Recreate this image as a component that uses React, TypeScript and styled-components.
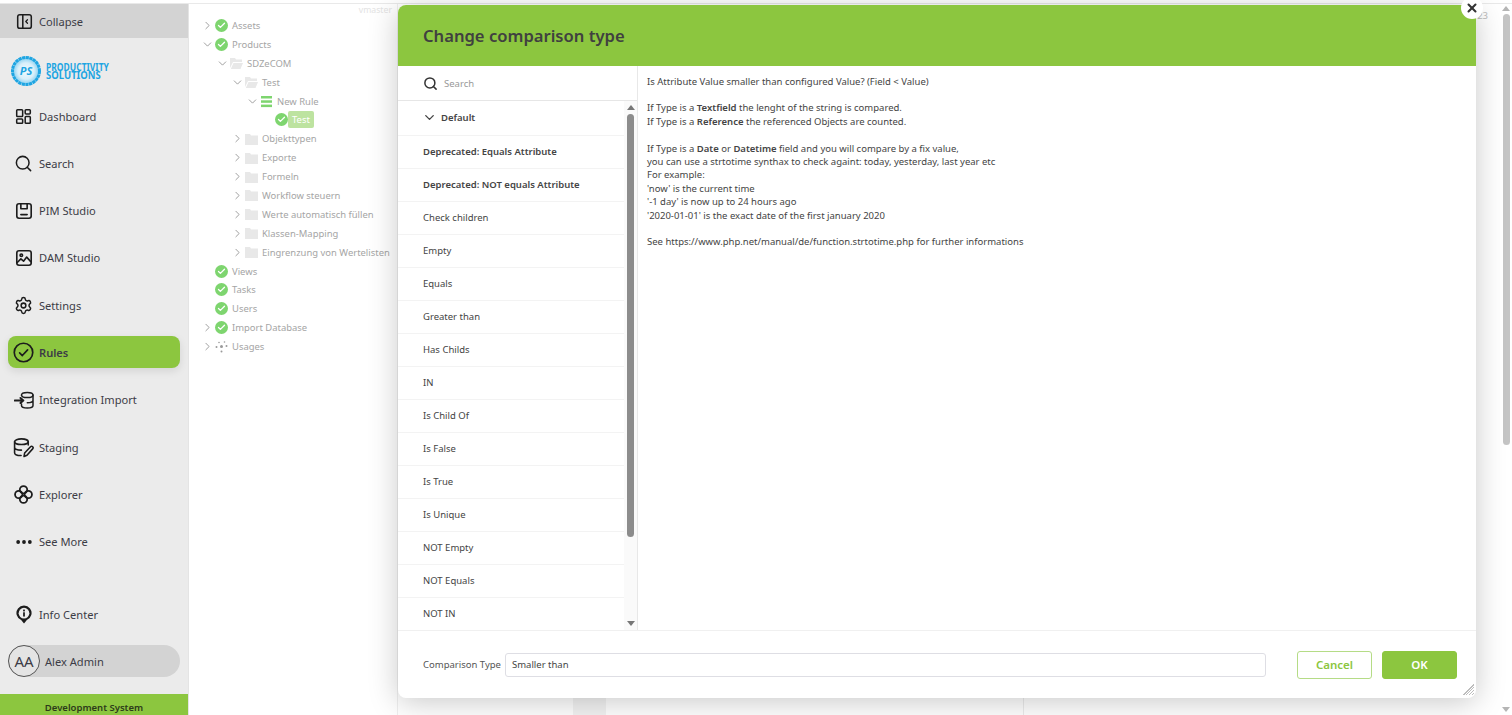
import React from 'react';
import styled, { createGlobalStyle } from 'styled-components';
import { Search, Settings, ChevronRight, ChevronDown, Check, X } from 'lucide-react';

const GREEN = '#8cc63f';
const FONT = '"Noto Sans", "Open Sans", sans-serif';

const GlobalStyle = createGlobalStyle`
	html, body { margin: 0; height: 100%; overflow: hidden; background: #fff; }
	body { font-family: ${FONT}; color: #444; }
	#root { height: 100%; }
	* { box-sizing: border-box; }
`;

type NavEntry = { label: string; icon: React.ReactNode; active?: boolean };

const Svg = ({ children, size = 18 }: { children: React.ReactNode; size?: number }) => (
	<svg width={size} height={size} viewBox="0 0 20 20" fill="none" stroke="#1c1c1c" strokeWidth="1.8" strokeLinecap="round" strokeLinejoin="round">
		{children}
	</svg>
);

const navItems: NavEntry[] = [
	{
		label: 'Dashboard',
		icon: (
			<Svg size={17}>
				<rect x="2" y="2" width="7" height="8" rx="1" />
				<rect x="12" y="2" width="6" height="5" rx="1" />
				<rect x="2" y="13" width="7" height="5" rx="1" />
				<rect x="12" y="10" width="6" height="8" rx="1" />
			</Svg>
		),
	},
	{ label: 'Search', icon: <Search size={19} strokeWidth={1.9} color="#1c1c1c" /> },
	{
		label: 'PIM Studio',
		icon: (
			<Svg size={18}>
				<rect x="2" y="2" width="16" height="16" rx="2.5" />
				<path d="M6.5 2v5.5h7V2" />
				<path d="M6.5 14h7" />
			</Svg>
		),
	},
	{
		label: 'DAM Studio',
		icon: (
			<Svg size={18}>
				<rect x="2" y="2" width="16" height="16" rx="2.5" />
				<circle cx="7" cy="7" r="1.4" />
				<path d="M2.5 15l4-4 3 2.5 3.5-4.5 4.5 5" />
			</Svg>
		),
	},
	{ label: 'Settings', icon: <Settings size={19} strokeWidth={1.9} color="#1c1c1c" /> },
	{
		label: 'Rules',
		active: true,
		icon: (
			<Svg size={21}>
				<circle cx="10" cy="10" r="8.8" strokeWidth="1.6" />
				<path d="M6.300 10.300l2.600 2.600 5-5.400" strokeWidth="1.600" />
			</Svg>
		),
	},
	{
		label: 'Integration Import',
		icon: (
			<Svg size={20}>
				<path d="M7.500 5.500V5c0-1.500 2.500-2.600 5.800-2.600S19 3.500 19 5s-2.500 2.600-5.700 2.600S7.500 6.500 7.500 5" strokeWidth="1.500" />
				<path d="M19 5v10.500c0 1.400-2.500 2.500-5.700 2.500s-5.800-1.100-5.800-2.500V14M19 10.300c0 1.400-2.500 2.500-5.700 2.500" strokeWidth="1.500" />
				<path d="M.8 10.500h8.200M6.500 8l2.800 2.500L6.500 13" strokeWidth="2" />
			</Svg>
		),
	},
	{
		label: 'Staging',
		icon: (
			<Svg size={21}>
				<ellipse cx="8" cy="4.500" rx="6.500" ry="2.700" strokeWidth="1.500" />
				<path d="M1.500 4.500v10.500c0 1.500 2.800 2.700 6.200 2.700M14.500 4.500v3M1.500 9.800c0 1.500 2.800 2.700 6.500 2.700" strokeWidth="1.500" />
				<path d="M10.500 18.500l.6-3.200 5.600-6a1.400 1.400 0 0 1 2 2l-5.400 6z" strokeWidth="1.500" />
			</Svg>
		),
	},
	{
		label: 'Explorer',
		icon: (
			<Svg size={19}>
				<circle cx="10" cy="5" r="3.900" strokeWidth="1.900" />
				<circle cx="5" cy="10" r="3.900" strokeWidth="1.900" />
				<circle cx="15" cy="10" r="3.900" strokeWidth="1.900" />
				<circle cx="10" cy="15" r="3.900" strokeWidth="1.900" />
			</Svg>
		),
	},
	{
		label: 'See More',
		icon: (
			<Svg size={18}>
				<circle cx="3.500" cy="10" r="1.200" fill="#1c1c1c" />
				<circle cx="10" cy="10" r="1.200" fill="#1c1c1c" />
				<circle cx="16.500" cy="10" r="1.200" fill="#1c1c1c" />
			</Svg>
		),
	},
];

type TreeEntry = { label: string; level: number; toggle?: 'open' | 'closed'; icon: 'check' | 'folder' | 'folderOpen' | 'lines' | 'nodes'; selected?: boolean };

const tree: TreeEntry[] = [
	{ label: 'Assets', level: 0, toggle: 'closed', icon: 'check' },
	{ label: 'Products', level: 0, toggle: 'open', icon: 'check' },
	{ label: 'SDZeCOM', level: 1, toggle: 'open', icon: 'folderOpen' },
	{ label: 'Test', level: 2, toggle: 'open', icon: 'folderOpen' },
	{ label: 'New Rule', level: 3, toggle: 'open', icon: 'lines' },
	{ label: 'Test', level: 4, icon: 'check', selected: true },
	{ label: 'Objekttypen', level: 2, toggle: 'closed', icon: 'folder' },
	{ label: 'Exporte', level: 2, toggle: 'closed', icon: 'folder' },
	{ label: 'Formeln', level: 2, toggle: 'closed', icon: 'folder' },
	{ label: 'Workflow steuern', level: 2, toggle: 'closed', icon: 'folder' },
	{ label: 'Werte automatisch füllen', level: 2, toggle: 'closed', icon: 'folder' },
	{ label: 'Klassen-Mapping', level: 2, toggle: 'closed', icon: 'folder' },
	{ label: 'Eingrenzung von Wertelisten', level: 2, toggle: 'closed', icon: 'folder' },
	{ label: 'Views', level: 0, icon: 'check' },
	{ label: 'Tasks', level: 0, icon: 'check' },
	{ label: 'Users', level: 0, icon: 'check' },
	{ label: 'Import Database', level: 0, toggle: 'closed', icon: 'check' },
	{ label: 'Usages', level: 0, toggle: 'closed', icon: 'nodes' },
];

const comparisons: { label: string; strong?: boolean }[] = [
	{ label: 'Deprecated: Equals Attribute', strong: true },
	{ label: 'Deprecated: NOT equals Attribute', strong: true },
	{ label: 'Check children' },
	{ label: 'Empty' },
	{ label: 'Equals' },
	{ label: 'Greater than' },
	{ label: 'Has Childs' },
	{ label: 'IN' },
	{ label: 'Is Child Of' },
	{ label: 'Is False' },
	{ label: 'Is True' },
	{ label: 'Is Unique' },
	{ label: 'NOT Empty' },
	{ label: 'NOT Equals' },
	{ label: 'NOT IN' },
];

const TreeIcon = ({ kind }: { kind: TreeEntry['icon'] }) => {
	if (kind === 'check') {
		return (
			<CheckBadge>
				<Check size={9} strokeWidth={3.500} color="#fff" />
			</CheckBadge>
		);
	}
	if (kind === 'lines') {
		return (
			<TreeGlyph width="13" height="13" viewBox="0 0 13 13" fill="#7ed56f">
				<rect x="1" y="1" width="11" height="2.500" />
				<rect x="1" y="5.300" width="11" height="2.500" />
				<rect x="1" y="9.600" width="11" height="2.500" />
			</TreeGlyph>
		);
	}
	if (kind === 'nodes') {
		return (
			<TreeGlyph width="13" height="13" viewBox="0 0 13 13" fill="#9a9a9a">
				<circle cx="6.500" cy="6.500" r="1.500" />
				<circle cx="1.500" cy="7" r="1" />
				<circle cx="11.500" cy="6" r="1" />
				<circle cx="6.500" cy="11.500" r="1" />
				<circle cx="4" cy="2.500" r=".8" />
				<circle cx="9.500" cy="2" r=".8" />
			</TreeGlyph>
		);
	}
	return (
		<TreeGlyph width="13" height="12" viewBox="0 0 13 12" fill="#e8e8e8">
			{kind === 'folder' ? (
				<path d="M0 1h5l1 1.500h7V12H0z" />
			) : (
				<path d="M0 1h5l1 1.500h6V5H3L0 11zM3.500 6H13l-2.500 6H.8z" />
			)}
		</TreeGlyph>
	);
};

export default function App() {
	return (
		<Page>
			<GlobalStyle />
			<Sidebar>
				<CollapseRow>
					<NavIcon>
						<Svg size={17}>
							<rect x="2" y="2" width="16" height="16" rx="2.500" />
							<path d="M8 2v16" />
							<path d="M13.500 8l-2 2 2 2" strokeWidth="1.500" />
						</Svg>
					</NavIcon>
					Collapse
				</CollapseRow>
				<LogoRow>
					<svg width="102" height="32" viewBox="0 0 102 32">
						<defs>
							<radialGradient id="logoFill">
								<stop offset="0" stopColor="#f2fafe" />
								<stop offset="0.6" stopColor="#d8effa" />
								<stop offset="1" stopColor="#7fcdf0" />
							</radialGradient>
						</defs>
						<circle cx="16" cy="16" r="13.500" fill="url(#logoFill)" stroke="#1ea5e2" strokeWidth="3" strokeDasharray="3.200 .5" />
						<text x="16" y="20" textAnchor="middle" fontSize="11" fontWeight="700" fontStyle="italic" fill="#1ea5e2" fontFamily="Noto Sans">PS</text>
						<text transform="translate(36 16) scale(.85 1)" fontSize="10" fontWeight="700" fill="#1ea5e2" fontFamily="Noto Sans">PRODUCTIVITY</text>
						<text transform="translate(36 23.500) scale(.95 1)" fontSize="10" fontWeight="700" fill="#1ea5e2" fontFamily="Noto Sans">SOLUTIONS</text>
					</svg>
				</LogoRow>
				<NavList>
					{navItems.map((item) => (
						<NavItem key={item.label} $active={item.active}>
							<NavIcon>{item.icon}</NavIcon>
							{item.label}
						</NavItem>
					))}
				</NavList>
				<SidebarBottom>
					<NavItem>
						<NavIcon>
							<svg width="16" height="19" viewBox="0 0 18 21" fill="none">
								<path d="M9 20.500l-3.200-3.700A8.500 8.500 0 1 1 12.200 16.800z" fill="#1c1c1c" />
								<circle cx="9" cy="9" r="6" fill="#ebebeb" />
								<rect x="8" y="8" width="2" height="4.800" fill="#1c1c1c" />
								<rect x="8" y="5" width="2" height="2" fill="#1c1c1c" />
							</svg>
						</NavIcon>
						Info Center
					</NavItem>
					<UserPill>
						<Avatar>AA</Avatar>
						Alex Admin
					</UserPill>
				</SidebarBottom>
				<SystemBar>Development System</SystemBar>
			</Sidebar>

			<TreePane>
				<Version>vmaster</Version>
				{tree.map((node, i) => (
					<TreeRow key={i} $level={node.level}>
						<Toggle>
							{node.toggle === 'open' && <ChevronDown size={15} color="#8a8a8a" strokeWidth={1.500} />}
							{node.toggle === 'closed' && <ChevronRight size={15} color="#8a8a8a" strokeWidth={1.500} />}
						</Toggle>
						<TreeIcon kind={node.icon} />
						<TreeLabel $selected={node.selected}>{node.label}</TreeLabel>
					</TreeRow>
				))}
			</TreePane>

			<Backdrop>
				<BackCount>23</BackCount>
				<BackBlock />
				<BackLine />
			</Backdrop>

			<PageScroll>
				<ScrollArrow $down={false} $color="#b5b5b5" />
				<PageThumb />
				<ScrollArrow $down $color="#b5b5b5" />
			</PageScroll>

			<Modal>
				<CloseButton>
					<X size={14} strokeWidth={3.500} color="#333" />
				</CloseButton>
				<ModalHeader>Change comparison type</ModalHeader>
				<ModalBody>
					<ListPane>
						<SearchRow>
							<Search size={15} strokeWidth={2.400} color="#333" />
							<SearchHint>Search</SearchHint>
						</SearchRow>
						<ListScroll>
							<ListItems>
								<GroupRow>
									<ChevronDown size={15} strokeWidth={2.200} color="#444" />
									Default
								</GroupRow>
								{comparisons.map((c) => (
									<ListRow key={c.label} $strong={c.strong}>
										{c.label}
									</ListRow>
								))}
							</ListItems>
							<Scrollbar>
								<ScrollArrow $down={false} $color="#777" />
								<ScrollThumb />
								<ScrollArrow $down $color="#777" />
							</Scrollbar>
						</ListScroll>
					</ListPane>
					<Description>
						<p>Is Attribute Value smaller than configured Value? (Field &lt; Value)</p>
						<p>
							If Type is a <b>Textfield</b> the lenght of the string is compared.
							<br />
							If Type is a <b>Reference</b> the referenced Objects are counted.
						</p>
						<p>
							If Type is a <b>Date</b> or <b>Datetime</b> field and you will compare by a fix value,
							<br />
							you can use a strtotime synthax to check againt: today, yesterday, last year etc
							<br />
							For example:
							<br />
							'now' is the current time
							<br />
							'-1 day' is now up to 24 hours ago
							<br />
							'2020-01-01' is the exact date of the first january 2020
						</p>
						<p>See https://www.php.net/manual/de/function.strtotime.php for further informations</p>
					</Description>
				</ModalBody>
				<ModalFooter>
					<FieldLabel>Comparison Type</FieldLabel>
					<ValueField>Smaller than</ValueField>
					<OutlineButton>Cancel</OutlineButton>
					<SolidButton>OK</SolidButton>
				</ModalFooter>
				<ResizeGrip />
			</Modal>
		</Page>
	);
}

const Page = styled.div`
	position: relative;
	display: flex;
	height: 715px;
	width: 1512px;
	overflow: hidden;
	padding-top: 4px;
	background: linear-gradient(#fff 3px, #e9e9e9 3px, #e9e9e9 4px, #fff 4px);
`;

const Sidebar = styled.aside`
	width: 189px;
	flex: none;
	display: flex;
	flex-direction: column;
	background: #ebebeb;
	border-right: 1px solid #e4e4e4;
	font-size: 11.100px;
	color: #3c3c46;
`;

const CollapseRow = styled.div`
	height: 34px;
	display: flex;
	align-items: center;
	gap: 4px;
	padding-left: 14px;
	background: #d3d3d3;
`;

const NavIcon = styled.span`
	width: 21px;
	height: 21px;
	flex: none;
	display: flex;
	align-items: center;
	justify-content: center;
`;

const LogoRow = styled.div`
	height: 56px;
	display: flex;
	align-items: center;
	padding: 9px 0 0 10px;
`;

const NavList = styled.nav`
	display: flex;
	flex-direction: column;
	gap: 15.300px;
	padding: 0 8px;
	margin-top: 6px;
`;

const NavItem = styled.div<{ $active?: boolean }>`
	height: 32px;
	display: flex;
	align-items: center;
	gap: 5px;
	padding-left: 5px;
	border-radius: 8px;
	background: ${(p) => (p.$active ? GREEN : 'transparent')};
	box-shadow: ${(p) => (p.$active ? '0 3px 8px rgba(0,0,0,.1)' : 'none')};
	font-weight: ${(p) => (p.$active ? 600 : 400)};
`;

const SidebarBottom = styled.div`
	flex: 1;
	display: flex;
	flex-direction: column;
	justify-content: flex-end;
	gap: 15px;
	padding: 0 8px 17px;
`;

const UserPill = styled.div`
	height: 32px;
	display: flex;
	align-items: center;
	gap: 5px;
	border-radius: 16px;
	background: #d3d3d3;
`;

const Avatar = styled.div`
	width: 32px;
	height: 32px;
	display: flex;
	align-items: center;
	justify-content: center;
	border: 1px solid #555;
	border-radius: 50%;
	background: #e4e4e4;
	font-size: 15px;
`;

const SystemBar = styled.div`
	height: 21px;
	display: flex;
	align-items: center;
	justify-content: center;
	padding-top: 5px;
	background: ${GREEN};
	font-size: 9.500px;
	font-weight: 600;
	color: #2c3a1a;
`;

const TreePane = styled.div`
	position: relative;
	width: 208px;
	flex: none;
	padding: 12px 0 0 12px;
	background: #fff;
	font-size: 9.450px;
	color: #a5a5a5;
`;

const Version = styled.span`
	position: absolute;
	top: 0;
	right: 5px;
	font-size: 8.700px;
	color: #e3e3e3;
`;

const TreeRow = styled.div<{ $level: number }>`
	height: 18.900px;
	display: flex;
	align-items: center;
	gap: 1px;
	margin-left: ${(p) => p.$level * 15}px;
`;

const Toggle = styled.span`
	width: 13px;
	height: 15px;
	flex: none;
	display: flex;
	align-items: center;
	justify-content: center;
`;

const TreeGlyph = styled.svg`
	flex: none;
`;

const CheckBadge = styled.span`
	width: 13px;
	height: 13px;
	flex: none;
	display: flex;
	align-items: center;
	justify-content: center;
	border-radius: 50%;
	background: #7ed56f;
`;

const TreeLabel = styled.span<{ $selected?: boolean }>`
	margin-left: ${(p) => (p.$selected ? -1 : 3)}px;
	padding: ${(p) => (p.$selected ? '2px 4px' : 0)};
	line-height: 13px;
	border-radius: 2px;
	background: ${(p) => (p.$selected ? '#bde3a0' : 'transparent')};
	color: ${(p) => (p.$selected ? '#fff' : '#a5a5a5')};
	white-space: nowrap;
`;

const Backdrop = styled.div`
	position: relative;
	flex: 1;
	border-left: 1px solid #efefef;
`;

const BackCount = styled.span`
	position: absolute;
	top: 5px;
	right: 24px;
	font-size: 9.500px;
	color: #bbb;
`;

const BackBlock = styled.div`
	position: absolute;
	left: 175px;
	bottom: 0;
	width: 33px;
	height: 18px;
	background: #f3f3f3;
`;

const BackLine = styled.div`
	position: absolute;
	left: 625px;
	bottom: 0;
	width: 1px;
	height: 18px;
	background: #ececec;
`;

const PageScroll = styled.div`
	position: absolute;
	top: 4px;
	right: 0;
	bottom: 0;
	width: 12px;
	display: flex;
	flex-direction: column;
	align-items: center;
	gap: 3px;
	padding: 2px 0 3px;
	background: #fff;
`;

const PageThumb = styled.div`
	width: 7px;
	height: 431px;
	margin-bottom: auto;
	border-radius: 4px;
	background: #c4c4c4;
`;

const ScrollArrow = styled.div<{ $down: boolean; $color: string }>`
	width: 0;
	height: 0;
	flex: none;
	border-left: 4px solid transparent;
	border-right: 4px solid transparent;
	${(p) => (p.$down ? 'border-top' : 'border-bottom')}: 5px solid ${(p) => p.$color};
`;

const Modal = styled.section`
	position: absolute;
	left: 398px;
	top: 5px;
	width: 1078px;
	height: 693px;
	display: flex;
	flex-direction: column;
	border-radius: 8px;
	background: #fff;
	box-shadow: 0 4px 30px rgba(0, 0, 0, 0.22);
`;

const CloseButton = styled.div`
	position: absolute;
	top: -8px;
	right: -7px;
	width: 22px;
	height: 22px;
	display: flex;
	align-items: center;
	justify-content: center;
	border-radius: 50%;
	background: #fff;
`;

const ModalHeader = styled.h2`
	height: 61px;
	flex: none;
	margin: 0;
	display: flex;
	align-items: center;
	padding-left: 25px;
	border-radius: 8px 8px 0 0;
	background: ${GREEN};
	font-size: 16.600px;
	font-weight: 600;
	color: #404040;
`;

const ModalBody = styled.div`
	height: 565px;
	flex: none;
	display: flex;
	border-bottom: 1px solid #f0f0f0;
`;

const ListPane = styled.div`
	width: 240px;
	flex: none;
	display: flex;
	flex-direction: column;
	border-right: 1px solid #e8e8e8;
`;

const SearchRow = styled.div`
	height: 35px;
	flex: none;
	display: flex;
	align-items: center;
	gap: 6px;
	padding-left: 25px;
	border-bottom: 1px solid #e6e6e6;
`;

const SearchHint = styled.span`
	font-size: 9.500px;
	color: #999;
`;

const ListScroll = styled.div`
	flex: 1;
	display: flex;
	min-height: 0;
`;

const ListItems = styled.div`
	flex: 1;
	overflow: hidden;
	font-size: 9.500px;
	color: #444;
`;

const GroupRow = styled.div`
	height: 34.800px;
	display: flex;
	align-items: center;
	gap: 4px;
	padding-left: 24px;
	border-bottom: 1px solid #f3f3f3;
	font-weight: 600;
`;

const ListRow = styled.div<{ $strong?: boolean }>`
	height: 33px;
	display: flex;
	align-items: center;
	padding-left: 25px;
	border-bottom: 1px solid #f3f3f3;
	font-weight: ${(p) => (p.$strong ? 600 : 400)};
`;

const Scrollbar = styled.div`
	width: 13px;
	flex: none;
	display: flex;
	flex-direction: column;
	align-items: center;
	gap: 4px;
	padding: 4px 0;
	background: #fafafa;
`;

const ScrollThumb = styled.div`
	width: 7px;
	height: 423px;
	margin-bottom: auto;
	border-radius: 4px;
	background: #8c8c8c;
`;

const Description = styled.div`
	flex: 1;
	padding: 8.500px 9px;
	font-size: 9.500px;
	line-height: 13.400px;
	color: #444;

	p {
		margin: 0 0 13.400px;
	}

	b {
		font-weight: 600;
	}
`;

const ModalFooter = styled.div`
	flex: 1;
	display: flex;
	align-items: center;
	padding: 0 19px 0 25px;
	font-size: 9.500px;
`;

const FieldLabel = styled.span`
	margin-right: 4px;
	color: #555;
`;

const ValueField = styled.div`
	width: 761px;
	height: 24px;
	display: flex;
	align-items: center;
	padding-left: 6px;
	border: 1px solid #dedee4;
	border-radius: 3px;
	color: #444;
`;

const OutlineButton = styled.div`
	width: 75px;
	height: 28px;
	margin-left: 31px;
	display: flex;
	align-items: center;
	justify-content: center;
	border: 1px solid #b5dc86;
	border-radius: 3px;
	font-size: 11.500px;
	font-weight: 600;
	color: ${GREEN};
`;

const SolidButton = styled(OutlineButton)`
	margin-left: 10px;
	border-color: ${GREEN};
	background: ${GREEN};
	color: #fff;
`;

const ResizeGrip = styled.div`
	position: absolute;
	right: 2px;
	bottom: 3px;
	width: 12px;
	height: 12px;
	background: repeating-linear-gradient(135deg, transparent 0 1px, #bdbdbd 1px 2px);
	clip-path: polygon(100% 0, 100% 100%, 0 100%);
`;
